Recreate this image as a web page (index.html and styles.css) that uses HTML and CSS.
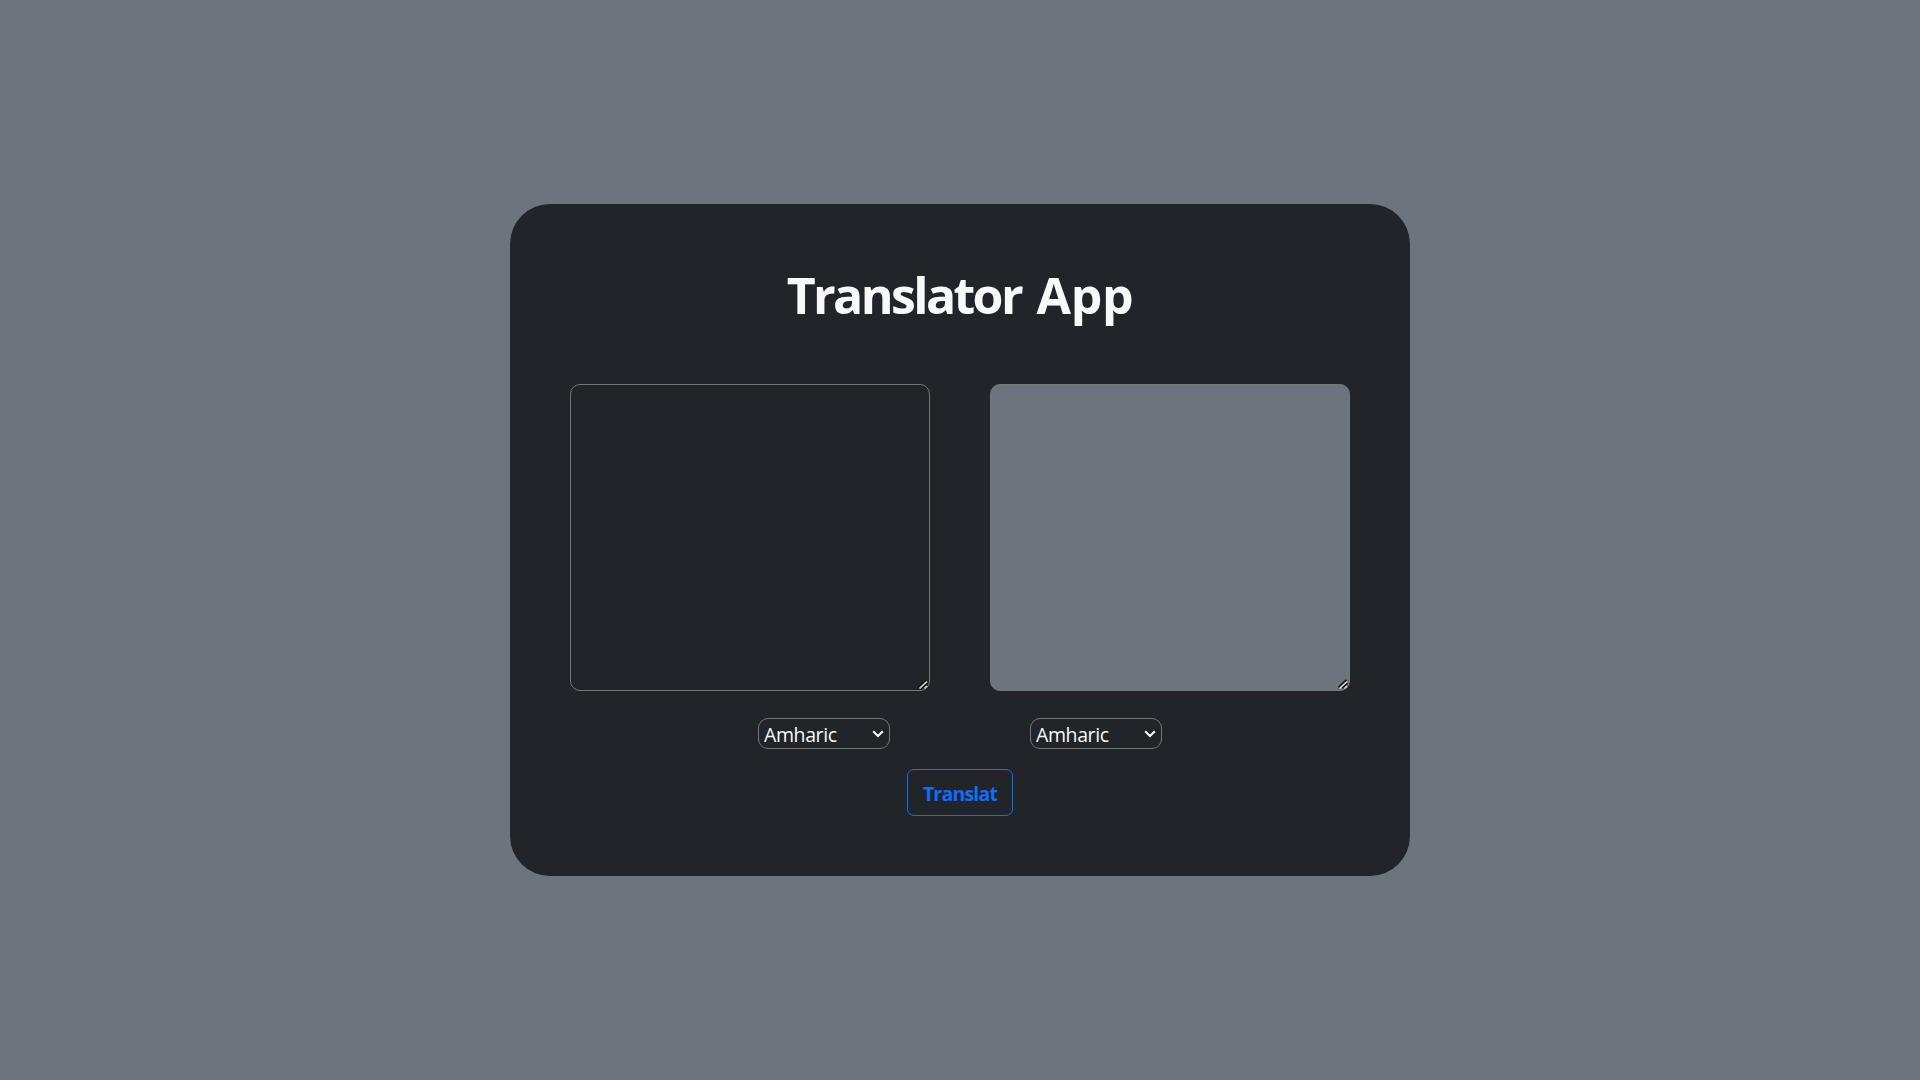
FILE: index.html
```html
<!DOCTYPE html>
<html lang="en">
<head>
<meta charset="utf-8">
<title>Translator App</title>
<link rel="stylesheet" href="styles.css">
</head>
<body>
<main class="card">
  <h1 class="title">Translator <span class="title-end">App</span></h1>
  <div class="texts">
    <div class="field">
      <textarea class="box" aria-label="Source text"></textarea>
      <svg class="grip" viewBox="0 0 12 12"><path class="grip-dark" d="M1.5 8.5 9.5 1M5.5 9 10.5 4.2"/><path class="grip-light" d="M2.5 9.5 10 2.5M7.5 9.5 10 7"/></svg>
    </div>
    <div class="field">
      <textarea class="box result" aria-label="Translation" readonly></textarea>
      <svg class="grip" viewBox="0 0 12 12"><path class="grip-dark" d="M1.5 8.5 9.5 1M5.5 9 10.5 4.2"/><path class="grip-light" d="M2.5 9.5 10 2.5M7.5 9.5 10 7"/></svg>
    </div>
  </div>
  <div class="languages">
    <div class="field">
      <select class="language" aria-label="From"><option>Amharic</option></select>
      <svg class="chevron" viewBox="0 0 12 8"><path d="M1.2 1.2 6 6 10.8 1.2"/></svg>
    </div>
    <div class="field">
      <select class="language" aria-label="To"><option>Amharic</option></select>
      <svg class="chevron" viewBox="0 0 12 8"><path d="M1.2 1.2 6 6 10.8 1.2"/></svg>
    </div>
  </div>
  <button class="translate" type="button">Translat</button>
</main>
</body>
</html>
```
FILE: styles.css
```css
* { box-sizing: border-box; }
body {
  margin: 0;
  height: 100vh;
  display: flex;
  align-items: center;
  justify-content: center;
  background: #6c757d;
  font-family: "Open Sans", "Noto Sans", sans-serif;
}
.card {
  width: 900px;
  height: 672px;
  padding: 60px;
  display: flex;
  flex-direction: column;
  align-items: center;
  background: #212529;
  border-radius: 40px;
}
.title {
  margin: 0 0 60px;
  height: 60px;
  line-height: 62px;
  font-size: 50px;
  font-weight: 700;
  letter-spacing: -2.6px;
  word-spacing: 5px;
  white-space: nowrap;
  color: #f8f9fa;
}
.title-end { letter-spacing: -0.3px; }
.texts { display: flex; gap: 60px; }
.field { position: relative; }
.box {
  display: block;
  width: 360px;
  height: 307px;
  border: 1px solid #767676;
  border-radius: 10px;
  background: #212529;
  color: #f8f9fa;
  font: 20px "Open Sans", sans-serif;
  outline: none;
  resize: none;
}
.result { background: #6c757d; }
.grip {
  position: absolute;
  right: 1px;
  bottom: 0;
  width: 12px;
  height: 12px;
  fill: none;
  pointer-events: none;
}
.grip-dark { stroke: #101214; stroke-width: 1.8; }
.grip-light { stroke: #d8d8d8; stroke-width: 1.7; }
.languages { display: flex; gap: 140px; margin: 27px 0 20px; }
.language {
  display: block;
  appearance: none;
  width: 132px;
  height: 31px;
  padding: 2px 0 0 5px;
  border: 1px solid #767676;
  border-radius: 10px;
  background: #212529;
  color: #f8f9fa;
  font: 19.5px "Open Sans", sans-serif;
  letter-spacing: -0.4px;
}
.chevron {
  position: absolute;
  right: 6px;
  top: 12px;
  width: 12px;
  height: 8px;
  fill: none;
  stroke: #f8f9fa;
  stroke-width: 2;
  pointer-events: none;
}
.translate {
  width: 106px;
  height: 47px;
  padding: 2px 0 0;
  border: 1px solid #0d6efd;
  border-radius: 7px;
  background: transparent;
  color: #0d6efd;
  font: 700 19.5px "Open Sans", sans-serif;
  letter-spacing: -0.8px;
}
```
